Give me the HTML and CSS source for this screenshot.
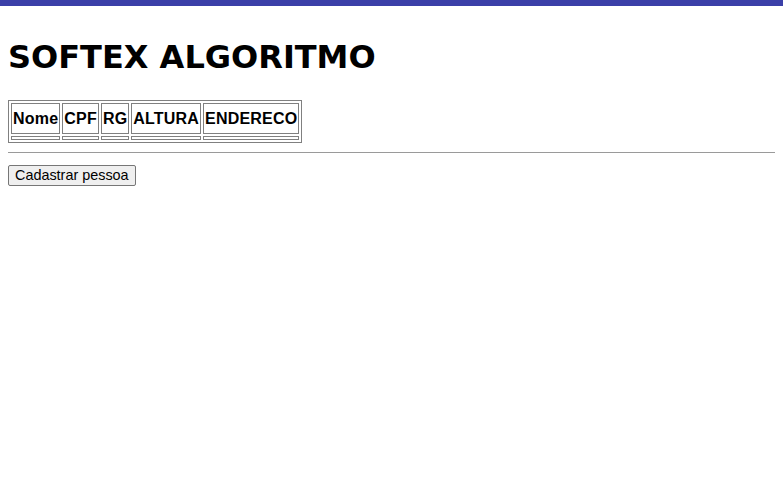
FILE: index.html
```html
<!DOCTYPE html>
<html>
<head>
<meta charset="utf-8">
<link rel="stylesheet" href="styles.css">
</head>
<body>
<div class="bar"></div>
<main class="content">
  <h1 class="title">SOFTEX ALGORITMO</h1>
  <table class="people" border="1">
    <thead>
      <tr>
        <th>Nome</th>
        <th>CPF</th>
        <th>RG</th>
        <th>ALTURA</th>
        <th>ENDERECO</th>
      </tr>
    </thead>
    <tbody>
      <tr><td></td><td></td><td></td><td></td><td></td></tr>
    </tbody>
  </table>
  <hr class="rule">
  <button class="btn" type="button">Cadastrar pessoa</button>
</main>
</body>
</html>
```
FILE: styles.css
```css
html, body {
  margin: 0;
  padding: 0;
  background: #ffffff;
}
body {
  font-family: "DejaVu Sans", sans-serif;
}
.bar {
  height: 6px;
  background: #3b3fa8;
}
.content {
  padding: 0 8px;
  display: flow-root;
}
.title {
  font-family: "DejaVu Sans", sans-serif;
  font-weight: bold;
  font-size: 32px;
  line-height: 44px;
  margin: 29px 0 21px;
  color: #000;
}
.people {
  border-spacing: 2px;
  border: 1px solid #808080;
  font-family: "Liberation Sans", Arial, sans-serif;
}
.people th {
  font-weight: bold;
  font-size: 16px;
  letter-spacing: 0.2px;
  padding: 1px;
  height: 27px;
  border: 1px solid #808080;
}
.people td {
  padding: 1px;
  border: 1px solid #808080;
}
.rule {
  margin: 9px 0 12px;
  border: 0;
  border-top: 1px solid #9a9a9a;
}
.btn {
  font-family: "Liberation Sans", Arial, sans-serif;
  font-size: 14.4px;
  line-height: 17px;
  padding: 1px 6px;
  border: 1px solid #767676;
  border-radius: 2px;
  background: #efefef;
  color: #000;
}
```
